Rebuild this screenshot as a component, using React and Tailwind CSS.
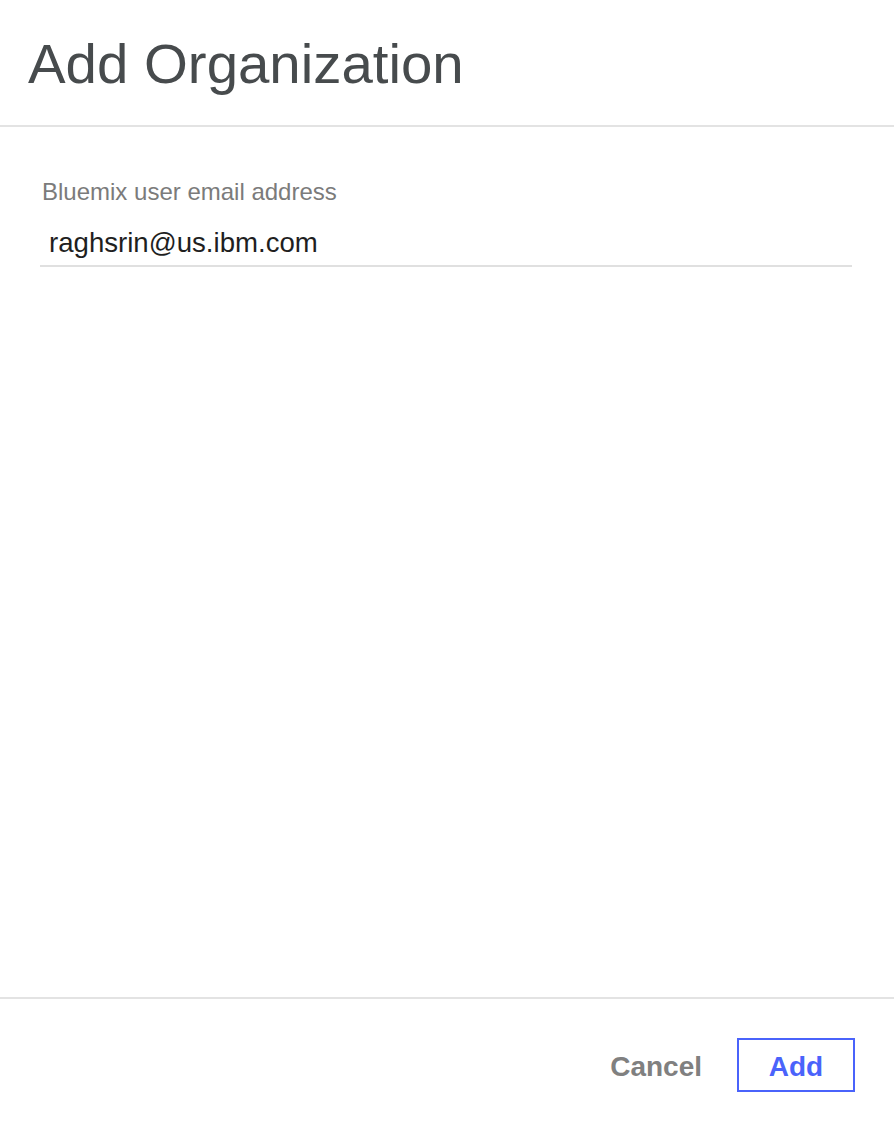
import React, { useState } from 'react';

export default function App() {
  const [email, setEmail] = useState('raghsrin@us.ibm.com');

  return (
    <div className="w-[894px] h-[1130px] bg-white flex flex-col font-['Liberation_Sans',Arial,sans-serif]">
      {/* Header */}
      <div className="h-[127px] border-b-2 border-[#e3e3e3] pt-[36px] px-[28px]">
        <h1 className="text-[56.4px] leading-[56px] text-[#474b4d]">Add Organization</h1>
      </div>

      {/* Body */}
      <div className="flex-1 px-[40px] pt-[53px]">
        <label className="block text-[24px] leading-[24px] text-[#7b7b7b] pl-[2px]">
          Bluemix user email address
        </label>
        <input
          value={email}
          onChange={(e) => setEmail(e.target.value)}
          className="mt-[20px] block w-[812px] h-[43px] pl-[9px] pb-[3px] text-[27.6px] text-[#1f1f1f] border-b-2 border-[#e0e0e0] outline-none bg-transparent"
        />
      </div>

      {/* Footer */}
      <div className="h-[133px] border-t-2 border-[#e3e3e3] flex items-start justify-end pr-[39px] pt-[39px]">
        <button className="h-[54px] pt-[3px] mr-[35px] text-[28px] font-bold text-[#808080]">Cancel</button>
        <button className="w-[118px] h-[54px] pt-[3px] border-2 border-[#4a63fb] text-[28px] font-bold text-[#4a63fb]">
          Add
        </button>
      </div>
    </div>
  );
}
